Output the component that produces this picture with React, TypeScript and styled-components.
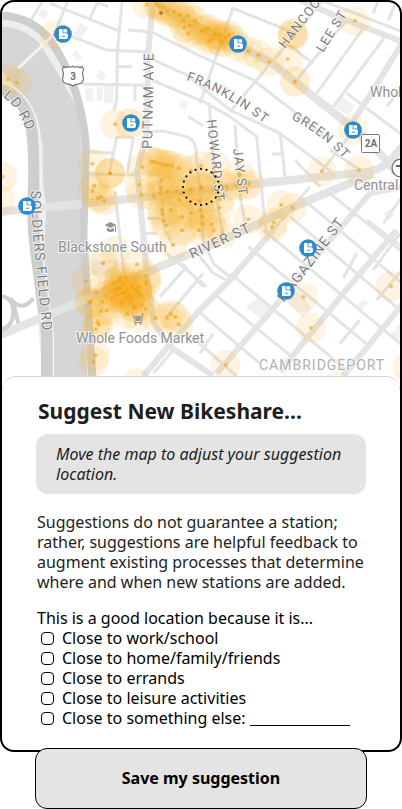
import React from "react";
import styled, { createGlobalStyle } from "styled-components";

const GlobalStyle = createGlobalStyle`
  *, *::before, *::after { box-sizing: border-box; }
  body {
    margin: 0;
    background: #fff;
    color: #000;
    font-family: "Noto Sans", sans-serif;
    font-size: 16px;
    line-height: 20px;
  }
`;

const Page = styled.main`
  display: flex;
  flex-direction: column;
`;

const Card = styled.section`
  display: flex;
  flex-direction: column;
  overflow: hidden;
  border: 2px solid #000;
  border-radius: 14px;
  background: #000;
`;

const MapView = styled.svg`
  display: block;
  width: 100%;
  height: auto;
  background: #fff;
`;

const Panel = styled.div`
  display: flex;
  flex-direction: column;
  margin-top: -12px;
  padding: 19px 34px 22px;
  border-top: 1px solid #d6d6d6;
  border-radius: 14px 14px 0 0;
  background: #fff;
  position: relative;
`;

const Title = styled.h1`
  margin: 0 2px;
  font-size: 21px;
  font-weight: 700;
  line-height: 30px;
  color: #1e1e1e;
`;

const Notice = styled.p`
  margin: 8px 0 18px;
  padding: 10px 20px;
  border-radius: 12px;
  background: #e4e4e4;
  color: #1e1e1e;
  font-style: italic;
`;

const Disclaimer = styled.p`
  margin: 0 -4px 16px 1px;
  color: #1e1e1e;
`;

const Reasons = styled.fieldset`
  margin: 0 0 0 1px;
  padding: 0;
  border: 0;
  min-width: 0;
`;

const Question = styled.legend`
  padding: 0;
`;

const ReasonRow = styled.div`
  display: flex;
  align-items: center;
  gap: 4px;
  height: 20px;
`;

const ReasonLabel = styled.label`
  display: flex;
  align-items: center;
  gap: 8px;
  padding-left: 4px;
`;

const Tick = styled.input`
  appearance: none;
  width: 13px;
  height: 13px;
  margin: 0;
  border: 1px solid #000;
  border-radius: 4px;
  background: #fff;
  &:checked { background: #000; }
`;

const OtherInput = styled.input`
  width: 100px;
  height: 16px;
  padding: 0;
  border: 0;
  border-bottom: 1px solid #000;
  background: transparent;
  font: inherit;
  outline: none;
`;

const SaveButton = styled.button`
  height: 61px;
  margin: -4px 35px 0;
  padding: 0 0 2px;
  border: 1px solid #000;
  border-radius: 12px;
  background: #e4e4e4;
  color: #000;
  font: inherit;
  font-weight: 700;
  position: relative;
`;

const Street = styled.text<{ $major?: boolean }>`
  font-family: Roboto, sans-serif;
  font-size: ${(p) => (p.$major ? 14 : 13)}px;
  letter-spacing: 1px;
  fill: #7d7d7d;
  stroke: #fff;
  stroke-opacity: 0.6;
  stroke-width: 2px;
  paint-order: stroke;
`;

const Place = styled.text`
  font-family: Roboto, sans-serif;
  font-size: 14px;
  fill: #919191;
  stroke: #fff;
  stroke-opacity: 0.7;
  stroke-width: 2px;
  paint-order: stroke;
`;

const District = styled(Place)`
  letter-spacing: 1px;
  fill: #b0b0b0;
`;

const Badge = styled.text`
  font-family: Roboto, sans-serif;
  font-size: 10px;
  font-weight: 700;
  fill: #6e6e6e;
  text-anchor: middle;
`;

/* Road geometry is kept on a grid three times finer than the labels. */
const roads: { w: number; d: string[] }[] = [
  {
    w: 9,
    d: [
      "M130 0L90 65", "M205 0L160 110", "M150 10L355 92", "M290 10L268 60M290 8L325 20",
      "M205 105L320 150L440 155", "M367 0L352 155L350 300L342 330", "M355 200H397", "M245 252L440 256", "M405 256V302",
      "M385 90L455 96L600 168L760 240L870 325L970 408", "M440 170L560 225L690 330L840 400L1000 520",
      "M455 240L610 305L690 350L770 410L790 620L800 700", "M565 350L610 378", "M628 310L634 400L650 600L668 700",
      "M705 375L722 600L740 690", "M840 395L855 530M817 462H845",
      "M440 395L490 393L560 410Q585 420 588 450L600 590L610 720L640 790L700 840",
      "M395 412H350L328 520M400 412L380 530", "M265 455L340 460M265 522L410 525", "M345 575L372 820",
      "M480 540L495 690L520 740", "M440 655H480M437 700H470",
      "M700 20L600 310", "M970 0L880 110L690 335", "M1040 60L885 245", "M1090 85L950 280", "M1155 110L1000 320",
      "M700 25L885 100", "M960 0L1040 30L1206 95", "M1120 40L1135 0M1165 60L1190 0", "M860 130L940 190",
      "M1040 280L1206 405", "M1160 320L1206 260", "M885 480L960 560", "M990 450L1080 510", "M1058 395L965 514",
      "M930 560L820 690", "M990 580L1206 755", "M925 610L1206 850", "M870 650L1206 935", "M790 690L1206 1035",
      "M745 740L1110 1040", "M690 820L1040 1110", "M640 880L900 1090", "M590 930L780 1090", "M540 980L710 1128",
      "M545 790L610 860M500 760L620 860M580 745L640 820L680 840", "M610 820L500 950M560 800L480 890",
      "M1206 590L1150 670M1100 660L1206 740", "M1200 700L1120 810", "M1070 760L1030 835",
      "M640 1000L600 1060M520 1050L460 1120", "M1080 960L1020 1030", "M1206 810L1130 900",
    ],
  },
  {
    w: 18,
    d: [
      "M458 0L445 160L440 400L412 510L430 710L445 860L462 970L510 1040L640 1128",
      "M1206 560L1110 580L990 720L850 890L650 1120", "M820 690L690 840L590 940L430 1128",
      "M1190 690L1030 880L840 1115", "M1206 915L1030 1128",
      "M1206 130L1120 270L1055 370", "M900 0L1000 45L1206 125",
    ],
  },
  {
    w: 25,
    d: [
      "M440 -10L530 50L660 110L810 185L885 245L1060 385L1140 460L1190 520",
      "M0 635L240 612L450 590L780 550L1110 515Q1160 505 1206 440",
      "M0 1005L240 905L480 800L740 688L900 612L1120 520",
    ],
  },
];

const buildings = [
  "M255 265h25v38h-25zM290 262h18v42h-18zM312 258h28v52h-28z", "M125 25l22 12-14 20-20-12z",
  "M240 68l24 16-22 32-20-14z", "M228 150l18 22-14 10-16-20z", "M300 210l20 12-10 22-24-12z",
  "M670 250l22 14-16 24-22-14z", "M1020 285l45 32-22 30-42-30z", "M1150 640l20-14 14 20-20 14z",
  "M1090 898l14 12-24 24-14-14z", "M1206 965l-36 40 36 22z", "M275 780h80v44h-80z",
  "M735 920l40-28 50 44-36 24zM845 895l50-20 40 50-24 30z", "M545 300l20 10-10 20-18-10z",
];

type Spot = [number, number, number?];

const spots: Spot[] = [
  [165, 105], [24, 238], [50, 248], [345, 373], [390, 370, 2], [8, 530], [0, 600], [277, 491], [330, 520, 4], [283, 557],
  [277, 573], [294, 594], [303, 591], [313, 603], [1065, 62], [878, 102, 3], [880, 108], [863, 177], [885, 245, 2],
  [965, 514], [1077, 511], [1058, 390], [844, 615], [878, 623], [822, 668], [816, 681], [745, 658], [910, 891],
  [933, 983], [1173, 859], [677, 1095], [286, 1066], [280, 1085], [309, 790, 2], [411, 793], [257, 843], [345, 752],
  [441, 14], [470, 12], [478, 18], [490, 22], [502, 33], [522, 36], [538, 44], [550, 62], [565, 48], [553, 82], [565, 101],
  [569, 77], [584, 62], [605, 92], [615, 90], [625, 86], [628, 122], [640, 116], [645, 102], [657, 106], [662, 122],
  [668, 128], [676, 112], [686, 104], [700, 120], [712, 140], [745, 153], [775, 164], [808, 186],
  [427, 501], [418, 554], [424, 584], [453, 485], [462, 486], [472, 488], [482, 491], [493, 494], [504, 496], [516, 497],
  [536, 505], [485, 541], [483, 565], [482, 580], [461, 588], [500, 575], [529, 575], [544, 580], [537, 600], [513, 629],
  [486, 630], [487, 642], [491, 662], [499, 676], [546, 650], [546, 691, 2], [520, 735], [573, 512], [602, 498],
  [572, 570], [603, 560, 2], [603, 566], [598, 603], [573, 639], [602, 630], [607, 650], [608, 672], [596, 691],
  [634, 672], [641, 691], [667, 700], [658, 623], [658, 598], [645, 495], [640, 570], [660, 548], [680, 560],
  [710, 557], [719, 524], [746, 551], [735, 558],
  [290, 879], [268, 908], [272, 905], [306, 905], [303, 934], [320, 931], [293, 967], [296, 974], [287, 987],
  [319, 888], [336, 895], [345, 870], [356, 841], [361, 833], [352, 868], [365, 880], [370, 855], [375, 895], [382, 870],
  [386, 887], [390, 905], [395, 860], [401, 921], [405, 923], [408, 868], [413, 877], [416, 862], [423, 884], [424, 914],
  [438, 828], [440, 842], [438, 850], [437, 927], [365, 910], [352, 885], [382, 941], [412, 953], [376, 830], [340, 850],
  [360, 865], [372, 878], [395, 892], [467, 954], [500, 954], [513, 943], [526, 951], [536, 973],
  [410, 1150], [1010, 1160], [1222, 1100],
];

/* Dense clusters get a soft wash beneath the individual halos. */
const washes: [number, number, number, number, number][] = [
  [555, 580, 115, 115, 0.22], [500, 520, 75, 60, 0.2], [580, 650, 95, 70, 0.15],
  [380, 875, 80, 75, 0.6], [635, 105, 95, 50, 0.4], [520, 45, 80, 50, 0.25],
];

const bikes: [number, number][] = [
  [63, 34], [238, 44], [131, 123], [353, 130], [27, 206], [308, 248], [286, 291],
];

function BikeMarker({ x, y }: { x: number; y: number }) {
  return (
    <g transform={`translate(${x} ${y})`}>
      <circle r="8.8" fill="#2e8acf" />
      <path
        fill="#fff"
        fillRule="evenodd"
        d="M-4-5H-.4V-.7H3.3Q4.9-.7 4.9.9V3.2Q4.9 5 3.1 5H-4ZM-.8 1.7H1.9V2.7H-.8ZM.4-4.7H3.2Q4.2-4.7 4.2-3.7V-1.4H.4Z"
      />
    </g>
  );
}

function CambridgeMap() {
  return (
    <MapView viewBox="2 2 398 386" role="img" aria-label="Map of suggested bikeshare stations">
      <defs>
        <path id="franklin" d="M186 80Q226 94 265 124" />
        <path id="green" d="M291 119Q320 133 345 160" />
        <path id="soldiers" d="M31 191Q31 218 36 265T45 360" />
        <path id="fieldEnd" d="M3 97Q18 106 29 137" />
        <radialGradient id="wash">
          <stop offset="0.3" stopColor="#f6a90c" />
          <stop offset="1" stopColor="#f6a90c" stopOpacity="0" />
        </radialGradient>
      </defs>
      <g transform="scale(0.33333)" fill="none" strokeLinejoin="round">
        <path fill="#eeeeee" d="M0 45Q100 60 160 140Q240 270 255 420L250 700L275 1170H130L85 600L100 430Q80 310 0 250Z" />
        <path fill="#d6d6d6" d="M0 78Q85 85 125 140Q175 220 232 325Q250 420 240 600L245 800L264 1170H160L130 760L140 620L130 560L127 430Q112 330 50 265L0 210Z" />
        <path stroke="#cecece" strokeWidth="34" d="M0 268Q65 285 92 370Q104 440 101 560Q94 660 108 760L140 1000V1170" />
        <path stroke="#f4f4f4" strokeWidth="4" d="M35 255Q100 300 118 390L122 560M128 760L160 1000V1170" />
        {buildings.map((d) => <path key={d} d={d} fill="#f1f1f1" />)}
        {roads.map((r) => <path key={r.w} d={r.d.join("")} stroke="#e4e4e4" strokeWidth={r.w} />)}
        <path stroke="#cecece" strokeWidth="24" d="M0 46Q95 50 150 120Q240 245 257 430Q257 520 250 700L262 900L280 1170" />
        <path stroke="#e1e1e1" strokeWidth="22" d="M200 616L245 612M200 922L280 888" />
        <path stroke="#f3f3f3" strokeWidth="9" d="M55 205L128 135L160 105" />
        <path stroke="#d0d0d0" strokeWidth="12" d="M0 888Q40 890 40 935T0 990M30 895Q65 940 100 895M40 910L55 970" />
        {washes.map(([x, y, rx, ry, a]) => (
          <ellipse key={`wash-${x}`} cx={x} cy={y} rx={rx} ry={ry} fill="url(#wash)" fillOpacity={a} />
        ))}
        {spots.map(([x, y, level = 1]) => (
          <circle key={`halo-${x}-${y}`} cx={x} cy={y} r="45" fill="#f6b02c" fillOpacity={0.06 + level * 0.08} />
        ))}
        {spots.map(([x, y, level = 1]) => (
          <circle key={`dot-${x}-${y}`} cx={x} cy={y} r="6" fill="#f2a10d" fillOpacity={0.45 + level * 0.13} />
        ))}
        <circle cx="483" cy="39" r="6" fill="#b7812a" />
      </g>

      <Street $major transform="translate(152 149) rotate(-89)">PUTNAM AVE</Street>
      <Street><textPath href="#franklin">FRANKLIN ST</textPath></Street>
      <Street><textPath href="#green">GREEN ST</textPath></Street>
      <Street transform="translate(285 49) rotate(-52)">HANCOCK</Street>
      <Street transform="translate(323 53) rotate(-58)">LEE ST</Street>
      <Street transform="translate(207 120) rotate(84)">HOWARD ST</Street>
      <Street transform="translate(233 149) rotate(83)">JAY ST</Street>
      <Street $major transform="translate(192 259) rotate(-25)">RIVER ST</Street>
      <Street $major transform="translate(284 303) rotate(-53)">MAGAZINE ST</Street>
      <Street $major><textPath href="#soldiers">SOLDIERS FIELD RD</textPath></Street>
      <Street $major><textPath href="#fieldEnd">LD RD</textPath></Street>

      <Place x="58" y="252">Blackstone South</Place>
      <Place x="76" y="343">Whole Foods Market</Place>
      <Place x="370" y="97">Whol</Place>
      <Place x="354" y="190">Central</Place>
      <District x="259" y="370">CAMBRIDGEPORT</District>

      <g fill="#969696">
        <path d="M104.500 225L110.500 222L116.500 225L110.500 228ZM107 227.500L110.500 229.500L114 227.500V231Q110.500 233 107 231ZM115 226H116V232H115Z" />
        <path d="M132.500 315.500H134.500L135.500 322H141L142 313.500H144V314.500H143L141.800 323H134.600L133.600 316.500H132.500ZM135.300 316H141L140.500 321H136Z" />
        <circle cx="135.500" cy="324" r="1" />
        <circle cx="140.500" cy="324" r="1" />
      </g>

      <path
        d="M64 66.500Q66 68.500 68.500 66.500Q71 68 73 66.300Q75 68 77.500 66.500Q80 68.500 82 66.500L83.700 69.500Q81.500 74 83.500 78Q83.500 83.500 78 84.200Q75 84.200 73 86Q71 84.200 68 84.200Q62.500 83.500 62.500 78Q64.500 74 62.300 69.500Z"
        fill="#fff"
        stroke="#777"
        strokeWidth="1.200"
      />
      <Badge x="73" y="80">3</Badge>
      <rect x="361.500" y="134.500" width="18" height="18" rx="1" fill="#fff" stroke="#777" />
      <Badge x="371" y="147">2A</Badge>
      <circle cx="401" cy="168" r="9" fill="#fff" stroke="#666" strokeWidth="1.200" />
      <path d="M396 166H406M401 166V173" stroke="#666" strokeWidth="2" />

      {bikes.map(([x, y]) => <BikeMarker key={`${x}-${y}`} x={x} y={y} />)}
      <circle cx="201" cy="187" r="18" fill="none" stroke="#000" strokeWidth="2.200" strokeLinecap="round" pathLength="100" strokeDasharray="0 5" />
    </MapView>
  );
}

const reasons = [
  { id: "work", label: "Close to work/school" },
  { id: "home", label: "Close to home/family/friends" },
  { id: "errands", label: "Close to errands" },
  { id: "leisure", label: "Close to leisure activities" },
  { id: "other", label: "Close to something else:" },
];

export default function App() {
  return (
    <>
      <GlobalStyle />
      <Page>
        <Card>
          <CambridgeMap />
          <Panel>
            <Title>Suggest New Bikeshare...</Title>
            <Notice>Move the map to adjust your suggestion location.</Notice>
            <Disclaimer>
              Suggestions do not guarantee a station; rather, suggestions are helpful feedback to
              augment existing processes that determine where and when new stations are added.
            </Disclaimer>
            <Reasons>
              <Question>This is a good location because it is...</Question>
              {reasons.map(({ id, label }) => (
                <ReasonRow key={id}>
                  <ReasonLabel htmlFor={id}>
                    <Tick type="checkbox" id={id} />
                    {label}
                  </ReasonLabel>
                  {id === "other" && <OtherInput type="text" aria-label="Something else" />}
                </ReasonRow>
              ))}
            </Reasons>
          </Panel>
        </Card>
        <SaveButton type="button">Save my suggestion</SaveButton>
      </Page>
    </>
  );
}
